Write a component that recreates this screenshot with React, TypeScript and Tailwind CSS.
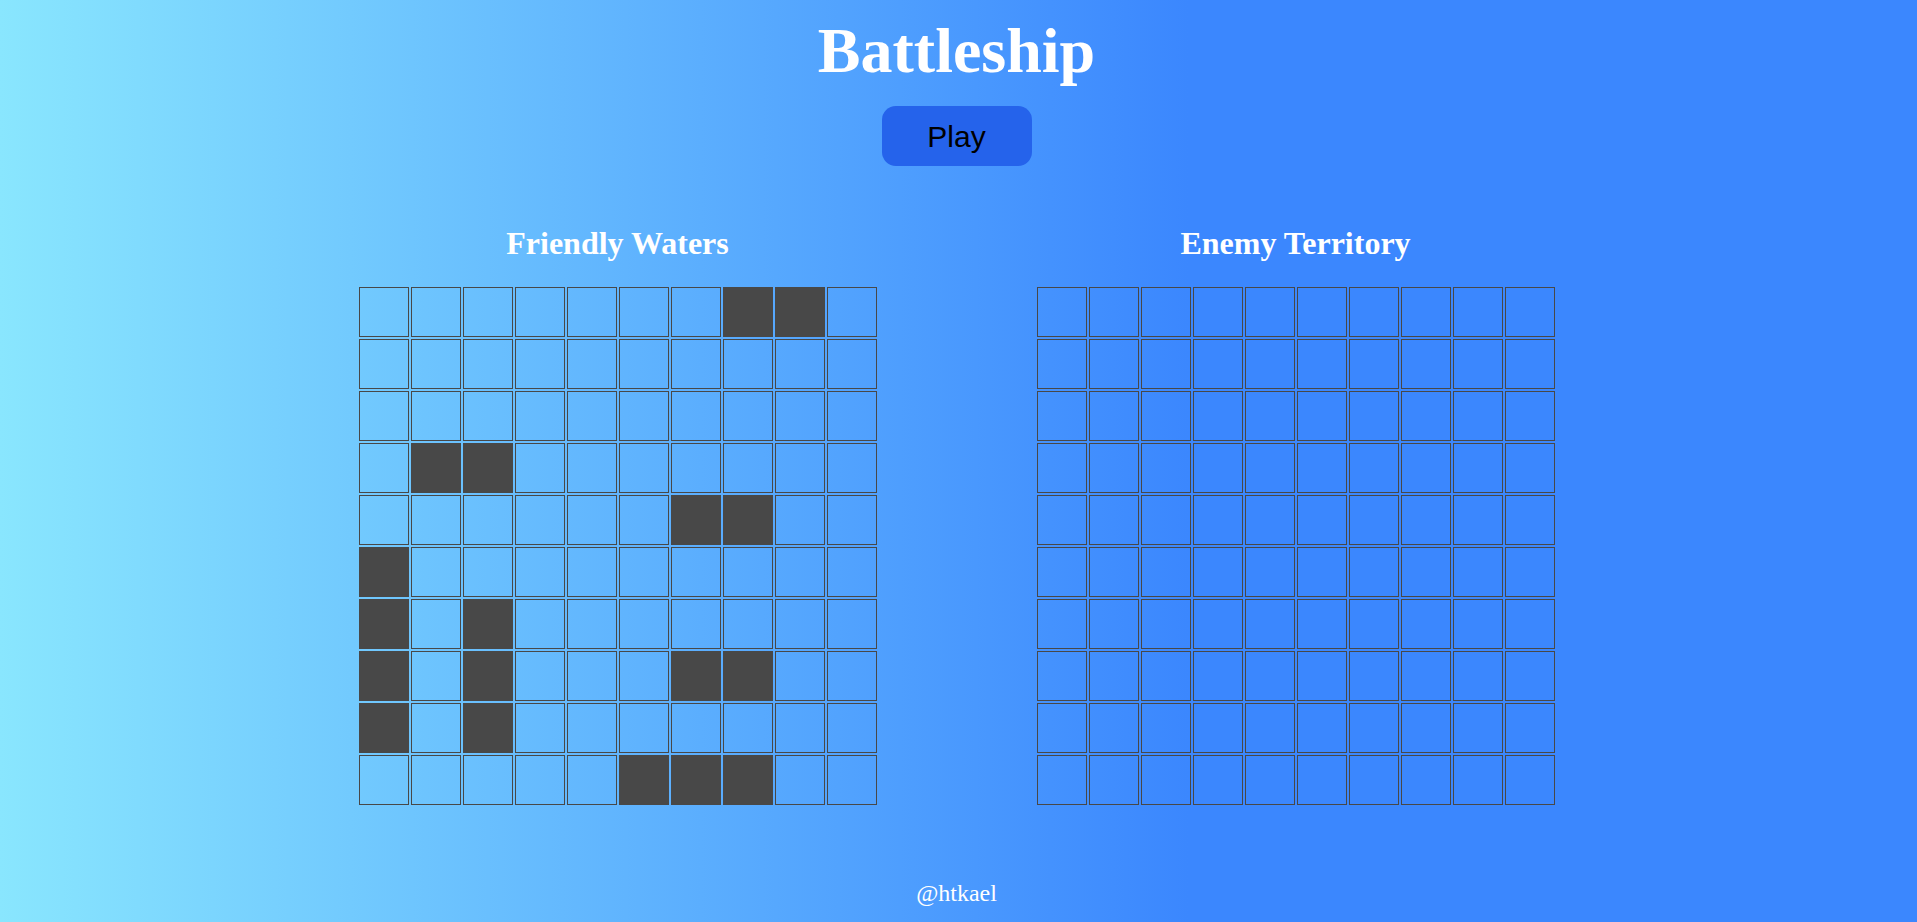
const ships = new Set([
  '0-7', '0-8',
  '3-1', '3-2',
  '4-6', '4-7',
  '5-0',
  '6-0', '6-2',
  '7-0', '7-2', '7-6', '7-7',
  '8-0', '8-2',
  '9-5', '9-6', '9-7',
])

const rows = Array.from({ length: 10 }, (_, i) => i)

function Board({ title, showShips }: { title: string; showShips: boolean }) {
  return (
    <div className="flex flex-col items-center">
      <h2 className="text-[32px] font-bold leading-none text-white">{title}</h2>
      <div className="mt-[28px] grid grid-cols-[repeat(10,50px)] gap-[2px]">
        {rows.map((r) =>
          rows.map((c) => (
            <div
              key={`${r}-${c}`}
              className={
                showShips && ships.has(`${r}-${c}`)
                  ? 'h-[50px] w-[50px] border border-[#484848] bg-[#484848]'
                  : 'h-[50px] w-[50px] border border-[#484848]'
              }
            />
          ))
        )}
      </div>
    </div>
  )
}

export default function App() {
  return (
    <div
      className="flex h-[922px] flex-col items-center overflow-hidden pr-[4px] bg-[linear-gradient(to_right,#89e6fe_0%,#3b87fe_62%,#3b87fe_100%)] font-['Liberation_Serif',serif]"
    >
      <h1 className="mt-[19px] text-[64px] font-bold leading-none text-white">Battleship</h1>
      <button className="mt-[23px] h-[60px] w-[150px] rounded-[14px] bg-[#2563eb] font-['Liberation_Sans',Arial,sans-serif] text-[30px] text-black">
        Play
      </button>
      <div className="mt-[61px] flex gap-[160px]">
        <Board title="Friendly Waters" showShips />
        <Board title="Enemy Territory" showShips={false} />
      </div>
      <p className="mt-[76px] text-[24px] leading-none text-white">@htkael</p>
    </div>
  )
}
